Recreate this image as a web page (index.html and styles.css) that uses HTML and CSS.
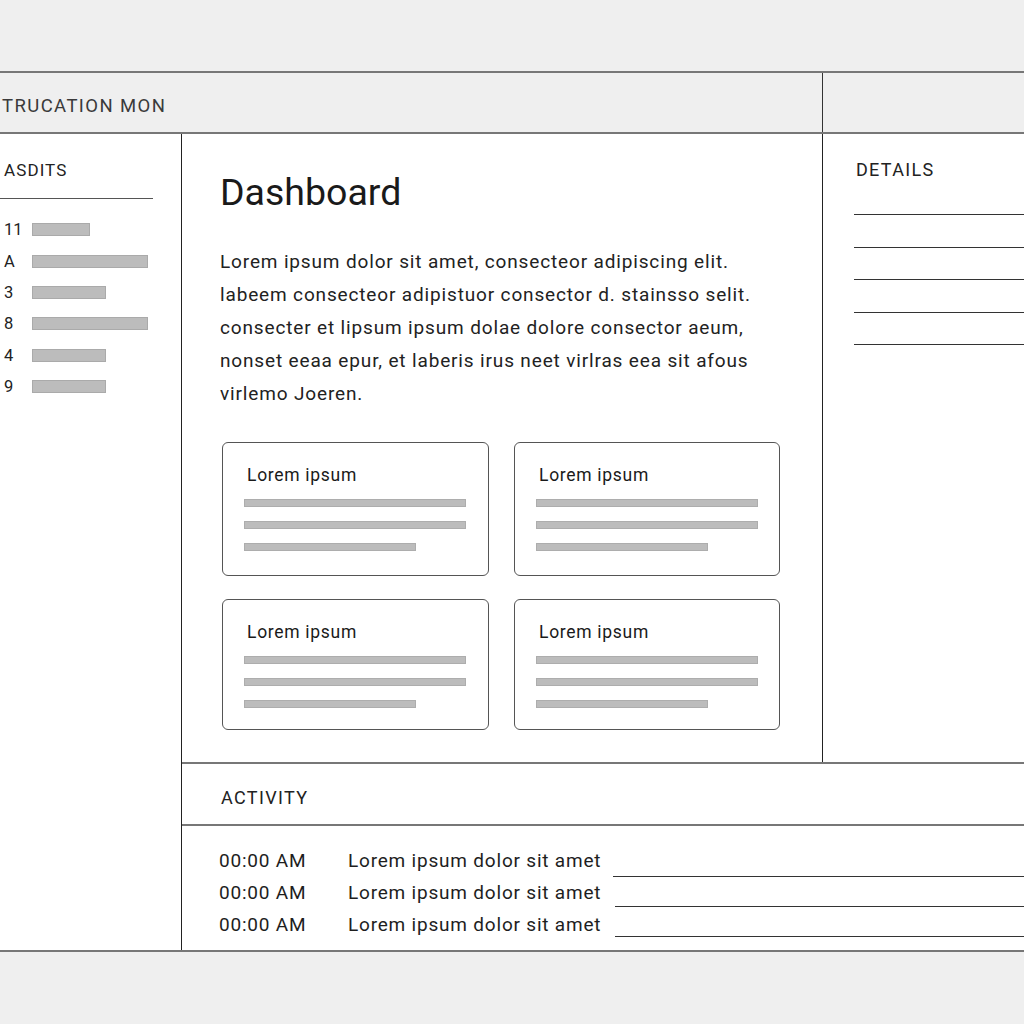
FILE: index.html
```html
<!DOCTYPE html>
<html>
<head>
<meta charset="utf-8">
<link rel="stylesheet" href="styles.css">
</head>
<body>
<div class="top"></div>
<div class="frame">
  <header class="bar">
    <div class="bar-title">TRUCATION MON</div>
    <div class="bar-side"></div>
  </header>
  <div class="body">
    <aside class="sidebar">
      <div class="side-title">ASDITS</div>
      <ul class="side-list">
        <li><span class="num">11</span><span class="sbar" style="width:58px"></span></li>
        <li><span class="num">A</span><span class="sbar" style="width:116px"></span></li>
        <li><span class="num">3</span><span class="sbar" style="width:74px"></span></li>
        <li><span class="num">8</span><span class="sbar" style="width:116px"></span></li>
        <li><span class="num">4</span><span class="sbar" style="width:74px"></span></li>
        <li><span class="num">9</span><span class="sbar" style="width:74px"></span></li>
      </ul>
    </aside>
    <div class="content">
      <div class="upper">
        <main class="main">
          <h1 class="title">Dashboard</h1>
          <p class="intro">Lorem ipsum dolor sit amet, consecteor adipiscing elit.<br>labeem consecteor adipistuor consector d. stainsso selit.<br>consecter et lipsum ipsum dolae dolore consector aeum,<br>nonset eeaa ерur, et laberis irus neet virlras eea sit afous<br>virlemo Joeren.</p>
          <div class="cards">
            <div class="card">
              <div class="card-title">Lorem ipsum</div>
              <div class="cbar"></div><div class="cbar"></div><div class="cbar short"></div>
            </div>
            <div class="card">
              <div class="card-title">Lorem ipsum</div>
              <div class="cbar"></div><div class="cbar"></div><div class="cbar short"></div>
            </div>
            <div class="card">
              <div class="card-title">Lorem ipsum</div>
              <div class="cbar"></div><div class="cbar"></div><div class="cbar short"></div>
            </div>
            <div class="card">
              <div class="card-title">Lorem ipsum</div>
              <div class="cbar"></div><div class="cbar"></div><div class="cbar short"></div>
            </div>
          </div>
        </main>
        <aside class="details">
          <div class="details-title">DETAILS</div>
          <div class="dline"></div>
          <div class="dline"></div>
          <div class="dline"></div>
          <div class="dline"></div>
          <div class="dline"></div>
        </aside>
      </div>
      <section class="activity">
        <div class="act-head">ACTIVITY</div>
        <div class="act-rows">
          <div class="row"><span class="time">00:00 AM</span><span class="msg">Lorem ipsum dolor sit amet</span><span class="rline"></span></div>
          <div class="row"><span class="time">00:00 AM</span><span class="msg">Lorem ipsum dolor sit amet</span><span class="rline"></span></div>
          <div class="row"><span class="time">00:00 AM</span><span class="msg">Lorem ipsum dolor sit amet</span><span class="rline"></span></div>
        </div>
      </section>
    </div>
  </div>
</div>
<div class="bottom"></div>
</body>
</html>
```
FILE: styles.css
```css
* { box-sizing: border-box; }
html, body { margin: 0; padding: 0; }
body {
  background: #efefef;
  font-family: Roboto, "Liberation Sans", sans-serif;
  color: #1e1e1e;
  width: 1024px;
  height: 1024px;
  overflow: hidden;
}
.top { height: 71px; }
.frame {
  border-top: 2px solid #777;
  border-bottom: 2px solid #777;
  background: #fff;
}
.bar {
  display: flex;
  height: 61px;
  border-bottom: 2px solid #777;
  background: #efefef;
}
.bar-title {
  width: 823px;
  border-right: 1px solid #333;
  display: flex;
  align-items: center;
  padding: 7px 0 0 2px;
  font-size: 18.5px;
  letter-spacing: 1.4px;
  color: #3a3a3a;
}
.bar-side { flex: 1; }
.body { display: flex; height: 816px; }
.sidebar {
  width: 182px;
  border-right: 1px solid #222;
  padding-top: 25px;
}
.side-title {
  font-size: 17px;
  letter-spacing: 1.1px;
  padding-left: 4px;
  height: 40px;
  line-height: 22px;
  width: 153px;
  border-bottom: 1px solid #555;
  color: #222;
}
.side-list {
  list-style: none;
  margin: 0;
  padding: 15px 0 0 0;
}
.side-list li {
  display: flex;
  align-items: center;
  height: 31.4px;
  font-size: 16.5px;
}
.num { width: 32px; padding-left: 4px; color: #222; }
.sbar {
  height: 13px;
  background: #bcbcbc;
  border: 1px solid #aaa;
}
.content { flex: 1; display: flex; flex-direction: column; }
.upper {
  display: flex;
  height: 630px;
  border-bottom: 2px solid #777;
}
.main {
  width: 641px;
  border-right: 1px solid #222;
  padding: 36px 0 0 38px;
}
.title {
  margin: 0;
  font-size: 37.5px;
  font-weight: 400;
  line-height: 44px;
  color: #1a1a1a;
}
.intro {
  margin: 31px 0 0 0;
  font-size: 19px;
  letter-spacing: 0.85px;
  line-height: 33px;
  color: #222;
}
.cards {
  margin-top: 32px;
  display: grid;
  grid-template-columns: 267px 266px;
  column-gap: 25px;
  row-gap: 23px;
  padding-left: 2px;
}
.card {
  height: 134px;
  border: 1px solid #555;
  border-radius: 6px;
  padding: 21px 0 0 21px;
}
.card:nth-child(n+3) { height: 131px; }
.card-title {
  font-size: 17.5px;
  letter-spacing: 0.7px;
  line-height: 22px;
  margin-left: 3px;
  margin-bottom: 13px;
  color: #1a1a1a;
}
.cbar {
  width: 222px;
  height: 8px;
  background: #bcbcbc;
  border: 1px solid #adadad;
  margin-bottom: 14px;
}
.cbar.short { width: 172px; }
.details {
  flex: 1;
  padding: 25px 0 0 31px;
}
.details-title {
  font-size: 18px;
  letter-spacing: 1.3px;
  padding-left: 2px;
  line-height: 22px;
  margin-bottom: 33px;
  color: #222;
}
.dline {
  height: 1px;
  background: #333;
  margin-bottom: 31.6px;
}
.activity { flex: 1; display: flex; flex-direction: column; }
.act-head {
  height: 62px;
  border-bottom: 2px solid #777;
  display: flex;
  align-items: center;
  padding: 6px 0 0 39px;
  font-size: 18px;
  letter-spacing: 1.35px;
  color: #222;
}
.act-rows { padding: 19px 0 0 37px; }
.row {
  display: flex;
  align-items: flex-start;
  height: 32px;
  line-height: 32px;
  font-size: 19px;
  letter-spacing: 0.8px;
  color: #1e1e1e;
}
.time { width: 129px; }
.msg { width: 265px; }
.rline {
  flex: 1;
  height: 1px;
  background: #333;
  margin-top: 31px;
}
.row:nth-child(2) .msg { width: 267px; }
.row:nth-child(2) .rline { margin-top: 29px; }
.row:nth-child(3) .msg { width: 267px; }
.row:nth-child(3) .rline { margin-top: 27px; }
.bottom { height: 74px; }
```
